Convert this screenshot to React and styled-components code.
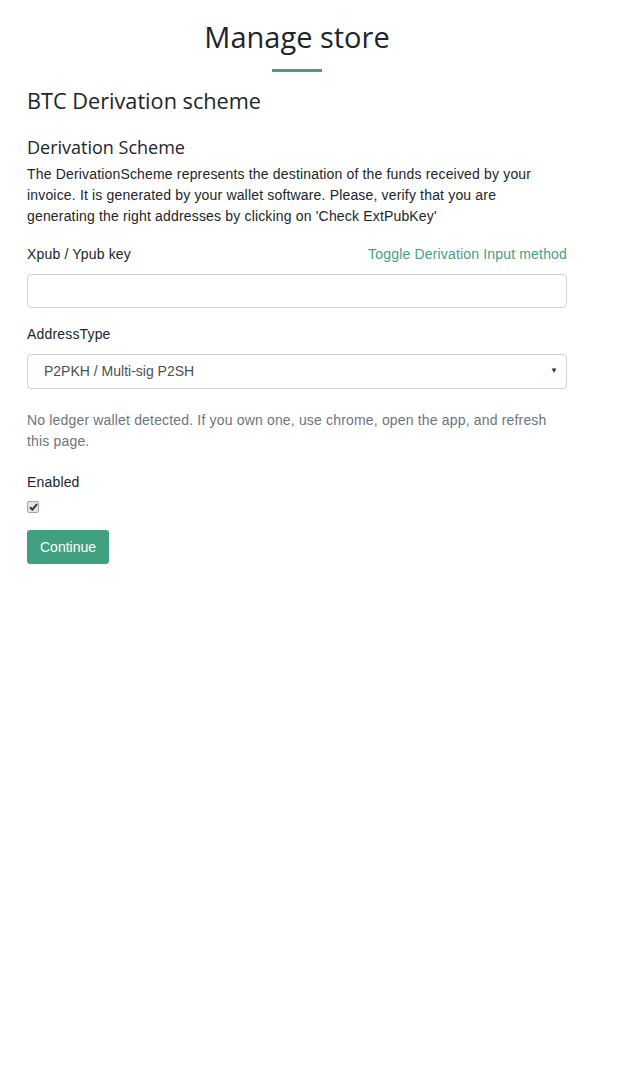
import React from 'react'
import styled, { createGlobalStyle } from 'styled-components';

const GlobalStyle = createGlobalStyle`
  body {
    margin: 0;
    background: #fff;
    font-family: 'Liberation Sans', Arial, sans-serif;
    font-size: 14px;
    line-height: 21px;
    letter-spacing: 0.17px;
    color: #212529;
  }
  * { box-sizing: border-box; }
`;

function App() {
  return (
    <>
      <GlobalStyle />
      <Page>
        <Title>Manage store</Title>
        <Divider />
        <Heading>BTC Derivation scheme</Heading>
        <SubHeading>Derivation Scheme</SubHeading>
        <Lead>
          The DerivationScheme represents the destination of the funds received by your invoice. It is
          generated by your wallet software. Please, verify that you are generating the right addresses
          by clicking on 'Check ExtPubKey'
        </Lead>

        <FormGroup>
          <LabelRow>
            <Label>Xpub / Ypub key</Label>
            <ToggleLink href="#">Toggle Derivation Input method</ToggleLink>
          </LabelRow>
          <TextInput type="text" />
        </FormGroup>

        <FormGroup>
          <LabelRow>
            <Label>AddressType</Label>
          </LabelRow>
          <SelectWrap>
            <Select defaultValue="p2pkh">
              <option value="p2pkh">P2PKH / Multi-sig P2SH</option>
            </Select>
            <Caret>▼</Caret>
          </SelectWrap>
        </FormGroup>

        <Muted>No ledger wallet detected. If you own one, use chrome, open the app, and refresh this page.</Muted>

        <Label>Enabled</Label>
        <CheckBox>
          <svg width="9" height="8" viewBox="0 0 9 8">
            <path d="M1 4.2 L3.4 6.6 L8 1.2" fill="none" stroke="#3b2f45" strokeWidth="2" />
          </svg>
        </CheckBox>
        <Button>Continue</Button>
      </Page>
    </>
  );
}

export default App

const Page = styled.div`
  width: 540px;
  margin-left: 27px;
  display: flex;
  flex-direction: column;
  align-items: flex-start;
`;

const Title = styled.h2`
  align-self: center;
  margin: 18px 0 0;
  font-family: 'Open Sans', sans-serif;
  font-weight: 400;
  font-size: 29px;
  line-height: 38px;
  letter-spacing: 0;
  color: #212529;
`;

const Divider = styled.div`
  align-self: center;
  width: 50px;
  height: 3px;
  margin-top: 13px;
  background: #41a07f;
`;

const Heading = styled.h4`
  margin: 14px 0 0;
  font-family: 'Open Sans', sans-serif;
  font-weight: 400;
  font-size: 21.7px;
  line-height: 29px;
  letter-spacing: 0;
`;

const SubHeading = styled.h5`
  margin: 20px 0 0;
  font-family: 'Open Sans', sans-serif;
  font-weight: 400;
  font-size: 18px;
  line-height: 24px;
  letter-spacing: 0;
`;

const Lead = styled.p`
  margin: 5px 0 0;
`;

const FormGroup = styled.div`
  width: 100%;
  margin-top: 17px;
  & + & { margin-top: 16px; }
`;

const LabelRow = styled.div`
  display: flex;
  justify-content: space-between;
  align-items: baseline;
  margin-bottom: 9px;
`;

const Label = styled.label`
  display: block;
  margin-top: 20px;
  ${LabelRow} & { margin-top: 0; }
`;

const ToggleLink = styled.a`
  color: #46a086;
  text-decoration: none;
`;

const TextInput = styled.input`
  display: block;
  width: 100%;
  height: 34px;
  border: 1px solid #ced4da;
  border-radius: 4px;
  padding: 6px 16px;
  font: inherit;
  color: #495057;
  outline: none;
`;

const SelectWrap = styled.div`
  position: relative;
  width: 100%;
`;

const Select = styled.select`
  display: block;
  width: 100%;
  height: 35px;
  appearance: none;
  border: 1px solid #ced4da;
  border-radius: 4px;
  padding: 0 16px;
  background: #fff;
  font: inherit;
  color: #495057;
  outline: none;
`;

const Caret = styled.span`
  position: absolute;
  right: 9px;
  top: 10px;
  font-size: 8px;
  line-height: 14px;
  color: #3b2f45;
  pointer-events: none;
`;

const Muted = styled.p`
  margin: 21px 0 0;
  color: #6c757d;
`;

const CheckBox = styled.span`
  display: flex;
  align-items: center;
  justify-content: center;
  width: 12px;
  height: 12px;
  margin-top: 8px;
  border: 1px solid #a9a9a0;
  border-radius: 2px;
  background: #e4e4e4;
`;

const Button = styled.button`
  margin-top: 17px;
  height: 34px;
  padding: 0 13px;
  border: none;
  border-radius: 3px;
  background: #41a07f;
  color: #fff;
  font: inherit;
  font-size: 14px;
  cursor: pointer;
`;
